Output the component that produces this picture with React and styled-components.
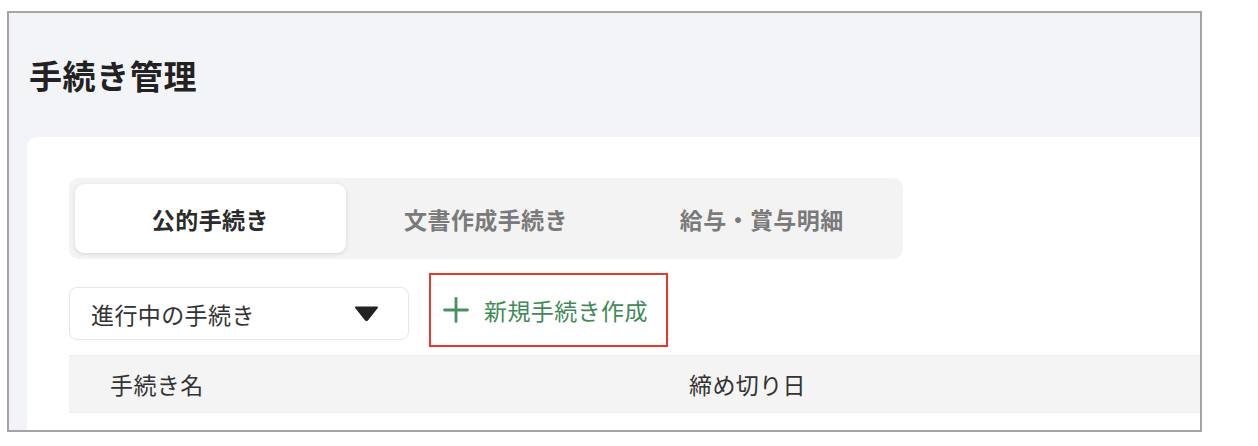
import React from 'react';
import styled, { createGlobalStyle } from 'styled-components';

const GlobalStyle = createGlobalStyle`
  html, body {
    margin: 0;
    padding: 0;
    background: #ffffff;
  }
  body {
    font-family: "Noto Sans CJK JP", "Noto Sans", sans-serif;
    color: #333333;
  }
`;

const Frame = styled.div`
  box-sizing: border-box;
  margin: 11px 0 0 7px;
  width: 1195px;
  height: 421px;
  border: 2px solid #a4a4a4;
  background: #f3f4f8;
  overflow: hidden;
  display: flex;
  flex-direction: column;
`;

const PageHeader = styled.header`
  height: 124px;
  display: flex;
  align-items: center;
  padding-left: 20px;
  flex-shrink: 0;
`;

const Title = styled.h1`
  margin: 0;
  font-size: 33px;
  font-weight: 700;
  color: #222222;
  letter-spacing: 0.6px;
  line-height: 1;
`;

const Card = styled.section`
  flex: 1;
  margin-left: 18px;
  background: #ffffff;
  border-top-left-radius: 10px;
  padding: 41px 0 0 42px;
`;

const Tabs = styled.div`
  box-sizing: border-box;
  width: 834px;
  height: 81px;
  padding: 6px;
  display: flex;
  gap: 5px;
  background: #f3f3f3;
  border-radius: 10px;
`;

const Tab = styled.button`
  flex: 1;
  border: none;
  border-radius: 9px;
  font-family: inherit;
  font-size: 23px;
  font-weight: 700;
  letter-spacing: 0.4px;
  cursor: pointer;
  background: ${(p) => (p.$active ? '#ffffff' : 'transparent')};
  color: ${(p) => (p.$active ? '#2b2b2b' : '#7a7a7a')};
  box-shadow: ${(p) => (p.$active ? '0 1px 4px rgba(0, 0, 0, 0.12)' : 'none')};
`;

const Toolbar = styled.div`
  margin-top: 14px;
  display: flex;
  align-items: flex-start;
  gap: 20px;
`;

const Select = styled.div`
  box-sizing: border-box;
  margin-top: 14px;
  width: 340px;
  height: 53px;
  padding: 0 29px 0 21px;
  border: 1px solid #e6e6e6;
  border-radius: 8px;
  display: flex;
  align-items: center;
  justify-content: space-between;
  font-size: 23px;
  letter-spacing: 0.4px;
  color: #333333;
`;

const NewButton = styled.button`
  box-sizing: border-box;
  width: 239px;
  height: 74px;
  padding: 0 0 0 12px;
  border: 2.5px solid #e8382b;
  background: #ffffff;
  display: flex;
  align-items: center;
  gap: 15px;
  font-family: inherit;
  font-size: 23px;
  letter-spacing: 0.4px;
  color: #3f8a58;
  cursor: pointer;
`;

const TableHead = styled.div`
  margin-top: 8px;
  height: 56px;
  display: grid;
  grid-template-columns: 620px 1fr;
  align-items: center;
  background: #f4f4f4;
  border-top: 1px solid #ebebeb;
  border-bottom: 1px solid #ebebeb;
`;

const HeadCell = styled.div`
  padding-left: ${(p) => (p.$indent ? '41px' : '0')};
  font-size: 23px;
  letter-spacing: 0.4px;
  color: #333333;
`;

function Caret() {
  return (
    <svg width="25" height="15" viewBox="0 0 25 15">
      <path d="M2 1.5 H23 L13.5 13.5 Q12.5 14.8 11.5 13.5 Z" fill="#222222" stroke="#222222" strokeWidth="2" strokeLinejoin="round" />
    </svg>
  );
}

function Plus() {
  return (
    <svg width="26" height="26" viewBox="0 0 26 26">
      <path d="M13 1.5 V24.5 M1.5 13 H24.5" stroke="#4a8f5e" strokeWidth="2.8" strokeLinecap="round" />
    </svg>
  );
}

export default function App() {
  const tabs = ['公的手続き', '文書作成手続き', '給与・賞与明細'];

  return (
    <>
      <GlobalStyle />
      <Frame>
        <PageHeader>
          <Title>手続き管理</Title>
        </PageHeader>
        <Card>
          <Tabs>
            {tabs.map((t, i) => (
              <Tab key={t} $active={i === 0}>{t}</Tab>
            ))}
          </Tabs>
          <Toolbar>
            <Select>
              <span>進行中の手続き</span>
              <Caret />
            </Select>
            <NewButton>
              <Plus />
              <span>新規手続き作成</span>
            </NewButton>
          </Toolbar>
          <TableHead>
            <HeadCell $indent>手続き名</HeadCell>
            <HeadCell>締め切り日</HeadCell>
          </TableHead>
        </Card>
      </Frame>
    </>
  );
}
